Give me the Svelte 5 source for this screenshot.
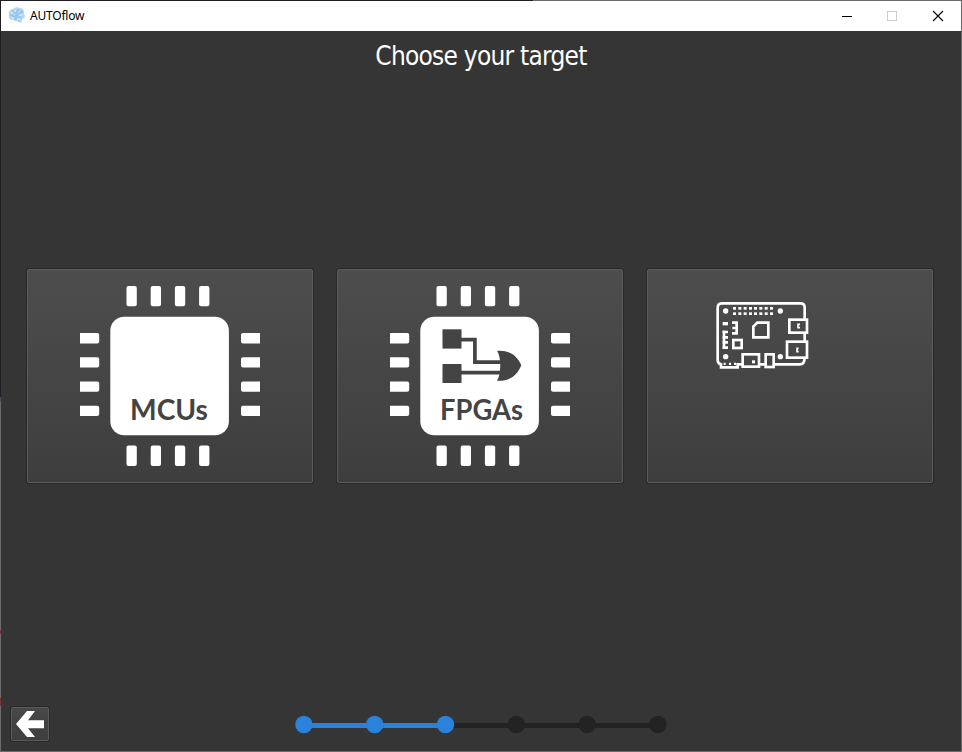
<script>
  const pins = [46.5, 70.7, 94.9, 119.1];
  const sidePins = [47.1, 71.3, 95.5, 119.7];
  const targets = [
    { id: 'mcu', label: 'MCUs', width: 78 },
    { id: 'fpga', label: 'FPGAs', width: 83 },
    { id: 'board', label: '', width: 0 }
  ];
  const steps = [0, 1, 2, 3, 4, 5];
  const current = 2;
  const headerPins = [84, 100, 116, 132, 147, 163, 179, 195];
</script>

<div class="window">
  <header>
    <svg class="logo" width="18" height="18" viewBox="0 0 18 18">
      <path d="M1 8C0 5 2 2 5 2C7 0 10 0 12 1C15 1 17 4 16 7C18 9 16 12 14 12L13 16L10 14C8 15 6 13 5 13C2 13 0 11 1 8Z" fill="#b5d7f3" />
      <path d="M4 4h2v2h3V3h2M2 8h3v2h3V8h3V6h3M6 12h3v-2h4v2M13 3v2h2M11 13v2" fill="none" stroke="#85b8e6" stroke-width="1" />
      <path d="M3 6h2M7 3v2M11 8h3M4 11h2M9 12h3" fill="none" stroke="#e8f5ff" stroke-width="1.2" />
    </svg>
    <span class="name">AUTOflow</span>
    <svg class="controls" width="138" height="29" viewBox="0 0 138 29" shape-rendering="crispEdges">
      <path d="M19 14.5h10" stroke="#000" />
      <rect x="64.5" y="9.5" width="9" height="9" fill="none" stroke="#ccc" />
      <path d="M110 9l10 10M120 9l-10 10" stroke="#000" stroke-width="1.1" shape-rendering="auto" />
    </svg>
  </header>

  <main>
    <h1>Choose your target</h1>
    <div class="cards">
      {#each targets as t (t.id)}
        <button class="card" aria-label={t.label || 'Board'}>
          <svg width="180" height="180" viewBox="0 0 180 180">
            {#if t.id !== 'board'}
              <g fill="#fff">
                <rect x="30.3" y="30.7" width="118.6" height="118.6" rx="14" />
                {#each pins as p}
                  <rect x={p} y="0" width="10.3" height="20.3" rx="2" />
                  <rect x={p} y="159.6" width="10.3" height="20.3" rx="2" />
                {/each}
                {#each sidePins as p}
                  <rect x="-4" y={p} width="23.2" height="10.3" rx="2" />
                  <rect x="161" y={p} width="23" height="10.3" rx="2" />
                {/each}
              </g>
              {#if t.id === 'fpga'}
                <g fill="#444">
                  <rect x="52.5" y="43.3" width="19" height="19.3" />
                  <rect x="52.5" y="78" width="19" height="19" />
                  <path d="M107 64.8C119 64 127 69 131.3 79.3C127 90 119 95.5 107 94.7Q110 90 110.3 79.5Q110 69 107 64.8Z" />
                </g>
                <path d="M71 53.7H84.9V76.2H111M71 86.6H111" fill="none" stroke="#444" stroke-width="3.7" />
              {/if}
              <text x="50" y="134.3" textLength={t.width} lengthAdjust="spacingAndGlyphs">{t.label}</text>
            {:else}
              <g transform="translate(5 6) scale(.33333)" fill="none" stroke="#fff" stroke-width="8">
                <path d="M299 80V46Q299 34 286 34H50Q38 34 38 48V204Q38 215 48 217V226H98V217H112M299 124V148M299 197Q299 217 284 217H210M163 217H180" />
                <path d="M59 219v-7M75 219v-7M90 219v-7" stroke-width="6" />
                <rect x="253" y="83" width="53" height="39" />
                <rect x="246" y="149" width="60" height="48" />
                <rect x="113" y="187" width="49" height="37" />
                <rect x="182" y="187" width="24" height="38" />
                <path d="M157 92H190V136H145V104Z" />
                <rect x="85" y="144" width="25" height="24" />
                <path d="M81 92H95V124H81M82 108H95" />
                <path d="M57 116V171" />
                <path d="M53 120h16M53 136h16M53 151h16M53 167h16" />
                <path d="M285 97h-6v10h6M281 169h-5v10h5" stroke-width="5" />
                <g fill="#fff" stroke="none">
                  <circle cx="62" cy="57" r="8" />
                  <circle cx="226" cy="57" r="8" />
                  <circle cx="62" cy="194" r="8" />
                  <circle cx="226" cy="194" r="8" />
                  <rect x="53" y="90" width="16" height="10" />
                  <rect x="141" y="205" width="9" height="9" />
                  {#each headerPins as p}
                    <rect x={p} y="45" width="9" height="8" />
                    <rect x={p} y="61" width="9" height="8" />
                  {/each}
                </g>
              </g>
            {/if}
          </svg>
        </button>
      {/each}
    </div>

    <footer>
      <button class="back" aria-label="Back">
        <svg width="36" height="32" viewBox="0 0 36 32">
          <path d="M4 16L15 3H23L16 12.3H32V20.3H16L23 29H15Z" fill="#fff" />
        </svg>
      </button>
      <svg class="steps" width="374" height="20" viewBox="0 0 374 20">
        <path d="M10 11.5H364" stroke="#232323" stroke-width="5" />
        <path d={`M10 11.5H${10 + current * 70.8}`} stroke="#2a82da" stroke-width="5" />
        {#each steps as s}
          <circle cx={9.9 + s * 70.8} cy="10.5" r="8.7" fill={s <= current ? '#2a82da' : '#232323'} />
        {/each}
      </svg>
    </footer>
  </main>
</div>

<style>
  :global(body) { margin: 0; overflow: hidden; }
  .window {
    box-sizing: border-box;
    width: 962px;
    height: 752px;
    display: flex;
    flex-direction: column;
    padding: 1px;
    background:
      linear-gradient(#353535, #353535) 1px 1px / 960px 750px no-repeat,
      linear-gradient(#211f22, #211f22) 0 0 / 533px 1px no-repeat,
      linear-gradient(#211f22 397px, #39566c 397px 402px, #6b6b6b 402px 630px, #7b3034 630px 634px, #6b6b6b 634px 698px, #7b3034 698px 706px, #6b6b6b 706px) 0 0 / 1px 752px no-repeat,
      #6b6b6b;
  }
  header {
    height: 30px;
    flex: none;
    display: flex;
    align-items: center;
    background: #fff;
  }
  .logo { margin: 0 0 0 7px; }
  .name {
    margin-left: 4px;
    font: 12px/16px "Noto Sans", sans-serif;
    letter-spacing: -0.2px;
    color: #000;
  }
  .controls { margin-left: auto; }
  main {
    flex: 1;
    display: flex;
    flex-direction: column;
    min-height: 0;
  }
  h1 {
    margin: 7px 0 0;
    height: 36px;
    text-align: center;
    font: 400 26px/36px "DejaVu Sans Condensed", "DejaVu Sans", sans-serif;
    font-stretch: condensed;
    letter-spacing: -0.75px;
    color: #fff;
  }
  .cards {
    display: flex;
    gap: 24px;
    margin: 195px 0 0 26px;
  }
  button {
    box-sizing: border-box;
    padding: 0;
    display: flex;
    align-items: center;
    justify-content: center;
    border: 1px solid #5b5b5b;
    border-radius: 2px;
    background: linear-gradient(#4d4d4d, #3e3e3e);
    box-shadow: 0 0 0 1px #292929;
  }
  .card { width: 286px; height: 214px; }
  text { font: 700 28.3px Lato, sans-serif; fill: #444; }
  footer {
    display: flex;
    align-items: center;
    margin: auto 0 10px 10px;
    height: 34px;
  }
  .back { width: 38px; height: 34px; background: linear-gradient(#484848, #3e3e3e); }
  .steps { margin-left: 245px; }
</style>
